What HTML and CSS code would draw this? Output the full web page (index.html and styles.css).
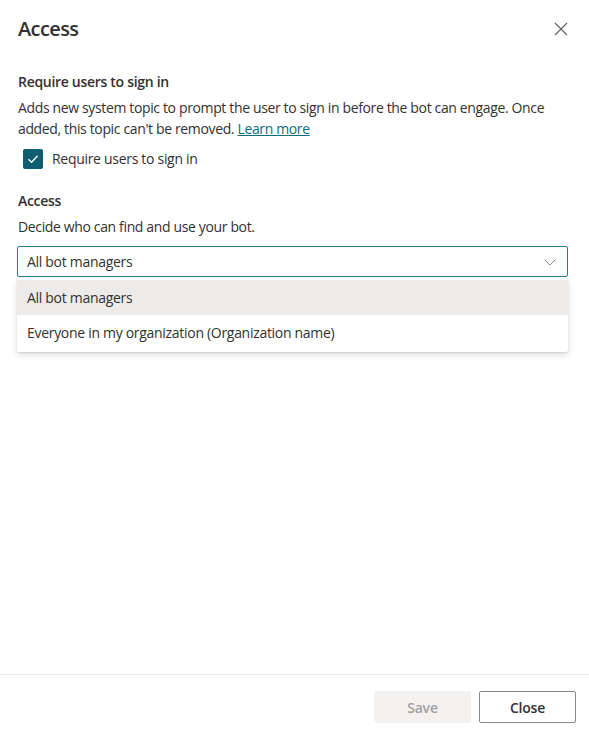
FILE: index.html
```html
<!DOCTYPE html>
<html>
<head>
<meta charset="utf-8">
<link rel="stylesheet" href="styles.css">
</head>
<body>
<div class="panel">
  <div class="header">
    <h1 class="title">Access</h1>
    <button class="close-x" aria-label="Close">
      <svg width="14" height="14" viewBox="0 0 14 14"><path d="M1 1 L13 13 M13 1 L1 13" stroke="#605e5c" stroke-width="1.1" fill="none"/></svg>
    </button>
  </div>
  <div class="content">
    <div class="section-label">Require users to sign in</div>
    <p class="desc">Adds new system topic to prompt the user to sign in before the bot can engage. Once added, this topic can't be removed. <a class="link" href="#">Learn more</a></p>
    <label class="check-row">
      <span class="checkbox">
        <svg width="14" height="14" viewBox="0 0 14 14"><path d="M2.5 7.2 L5.6 10.2 L11.6 3.8" stroke="#fff" stroke-width="1.3" fill="none"/></svg>
      </span>
      <span class="check-label">Require users to sign in</span>
    </label>
    <div class="section-label access-label">Access</div>
    <p class="desc desc-single">Decide who can find and use your bot.</p>
    <div class="dropdown-wrap">
      <div class="dropdown">
        <span>All bot managers</span>
        <svg width="14" height="14" viewBox="0 0 14 14"><path d="M1.5 4.5 L7 10 L12.5 4.5" stroke="#8a8886" stroke-width="1" fill="none"/></svg>
      </div>
      <div class="menu">
        <div class="option selected">All bot managers</div>
        <div class="option">Everyone in my organization (Organization name)</div>
      </div>
    </div>
  </div>
  <div class="footer">
    <button class="btn btn-disabled">Save</button>
    <button class="btn btn-default">Close</button>
  </div>
</div>
</body>
</html>
```
FILE: styles.css
```css
* { box-sizing: border-box; }
html, body { margin: 0; padding: 0; background: #fff; }
body {
  font-family: "Segoe UI", "Open Sans", "Liberation Sans", sans-serif;
  font-size: 14px;
  color: #323130;
  width: 589px;
  height: 735px;
  overflow: hidden;
}
.panel {
  display: flex;
  flex-direction: column;
  height: 735px;
}
.header {
  display: flex;
  justify-content: space-between;
  align-items: center;
  padding: 14px 21px 0 18px;
  height: 44px;
}
.title {
  margin: 0;
  font-size: 20px;
  font-weight: 600;
  line-height: 28px;
  color: #323130;
  letter-spacing: -0.6px;
}
.close-x {
  border: 0;
  background: none;
  padding: 0;
  width: 14px;
  height: 14px;
  display: flex;
}
.content {
  flex: 1;
  padding: 28px 21px 0 18px;
}
.section-label {
  font-weight: 600;
  line-height: 20px;
  letter-spacing: -0.3px;
}
.desc {
  margin: 5px 0 0;
  line-height: 21px;
  letter-spacing: -0.36px;
}
.link { color: #0f6c7e; text-decoration: underline; }
.check-row {
  display: flex;
  align-items: center;
  gap: 9px;
  margin-top: 10px;
  margin-left: 5px;
}
.checkbox {
  width: 20px;
  height: 20px;
  border-radius: 2px;
  background: #0f5d6e;
  display: flex;
  align-items: center;
  justify-content: center;
}
.check-label { letter-spacing: -0.3px; line-height: 20px; }
.access-label { margin-top: 22px; }
.desc-single { margin-top: 5px; }
.dropdown-wrap { margin-top: 9px; }
.dropdown {
  height: 31px;
  border: 1.5px solid #2b7d8d;
  border-radius: 2px;
  display: flex;
  align-items: center;
  justify-content: space-between;
  padding: 0 10px 0 9px;
  letter-spacing: -0.3px;
  width: 551px;
  margin-left: -1px;
}
.menu {
  width: 551px;
  margin-left: -1px;
  margin-top: 1px;
  background: #fff;
  box-shadow: 0 3px 7px rgba(0,0,0,0.13), 0 0.6px 2px rgba(0,0,0,0.1);
  border-radius: 2px;
  padding: 2px 0;
}
.option {
  height: 35px;
  display: flex;
  align-items: center;
  padding: 0 10px;
  letter-spacing: -0.3px;
}
.option.selected { background: #edebe9; }
.footer {
  border-top: 1px solid #edebe9;
  display: flex;
  justify-content: flex-end;
  gap: 8px;
  padding: 16px 13px 0 0;
  height: 61px;
  margin-bottom: 0;
}
.btn {
  width: 97px;
  height: 32px;
  font-family: inherit;
  font-size: 14px;
  font-weight: 600;
  border-radius: 2px;
  letter-spacing: -0.2px;
}
.btn-disabled {
  background: #f3f2f1;
  color: #a19f9d;
  border: 1px solid #f3f2f1;
}
.btn-default {
  background: #fff;
  color: #323130;
  border: 1px solid #8a8886;
}
```
